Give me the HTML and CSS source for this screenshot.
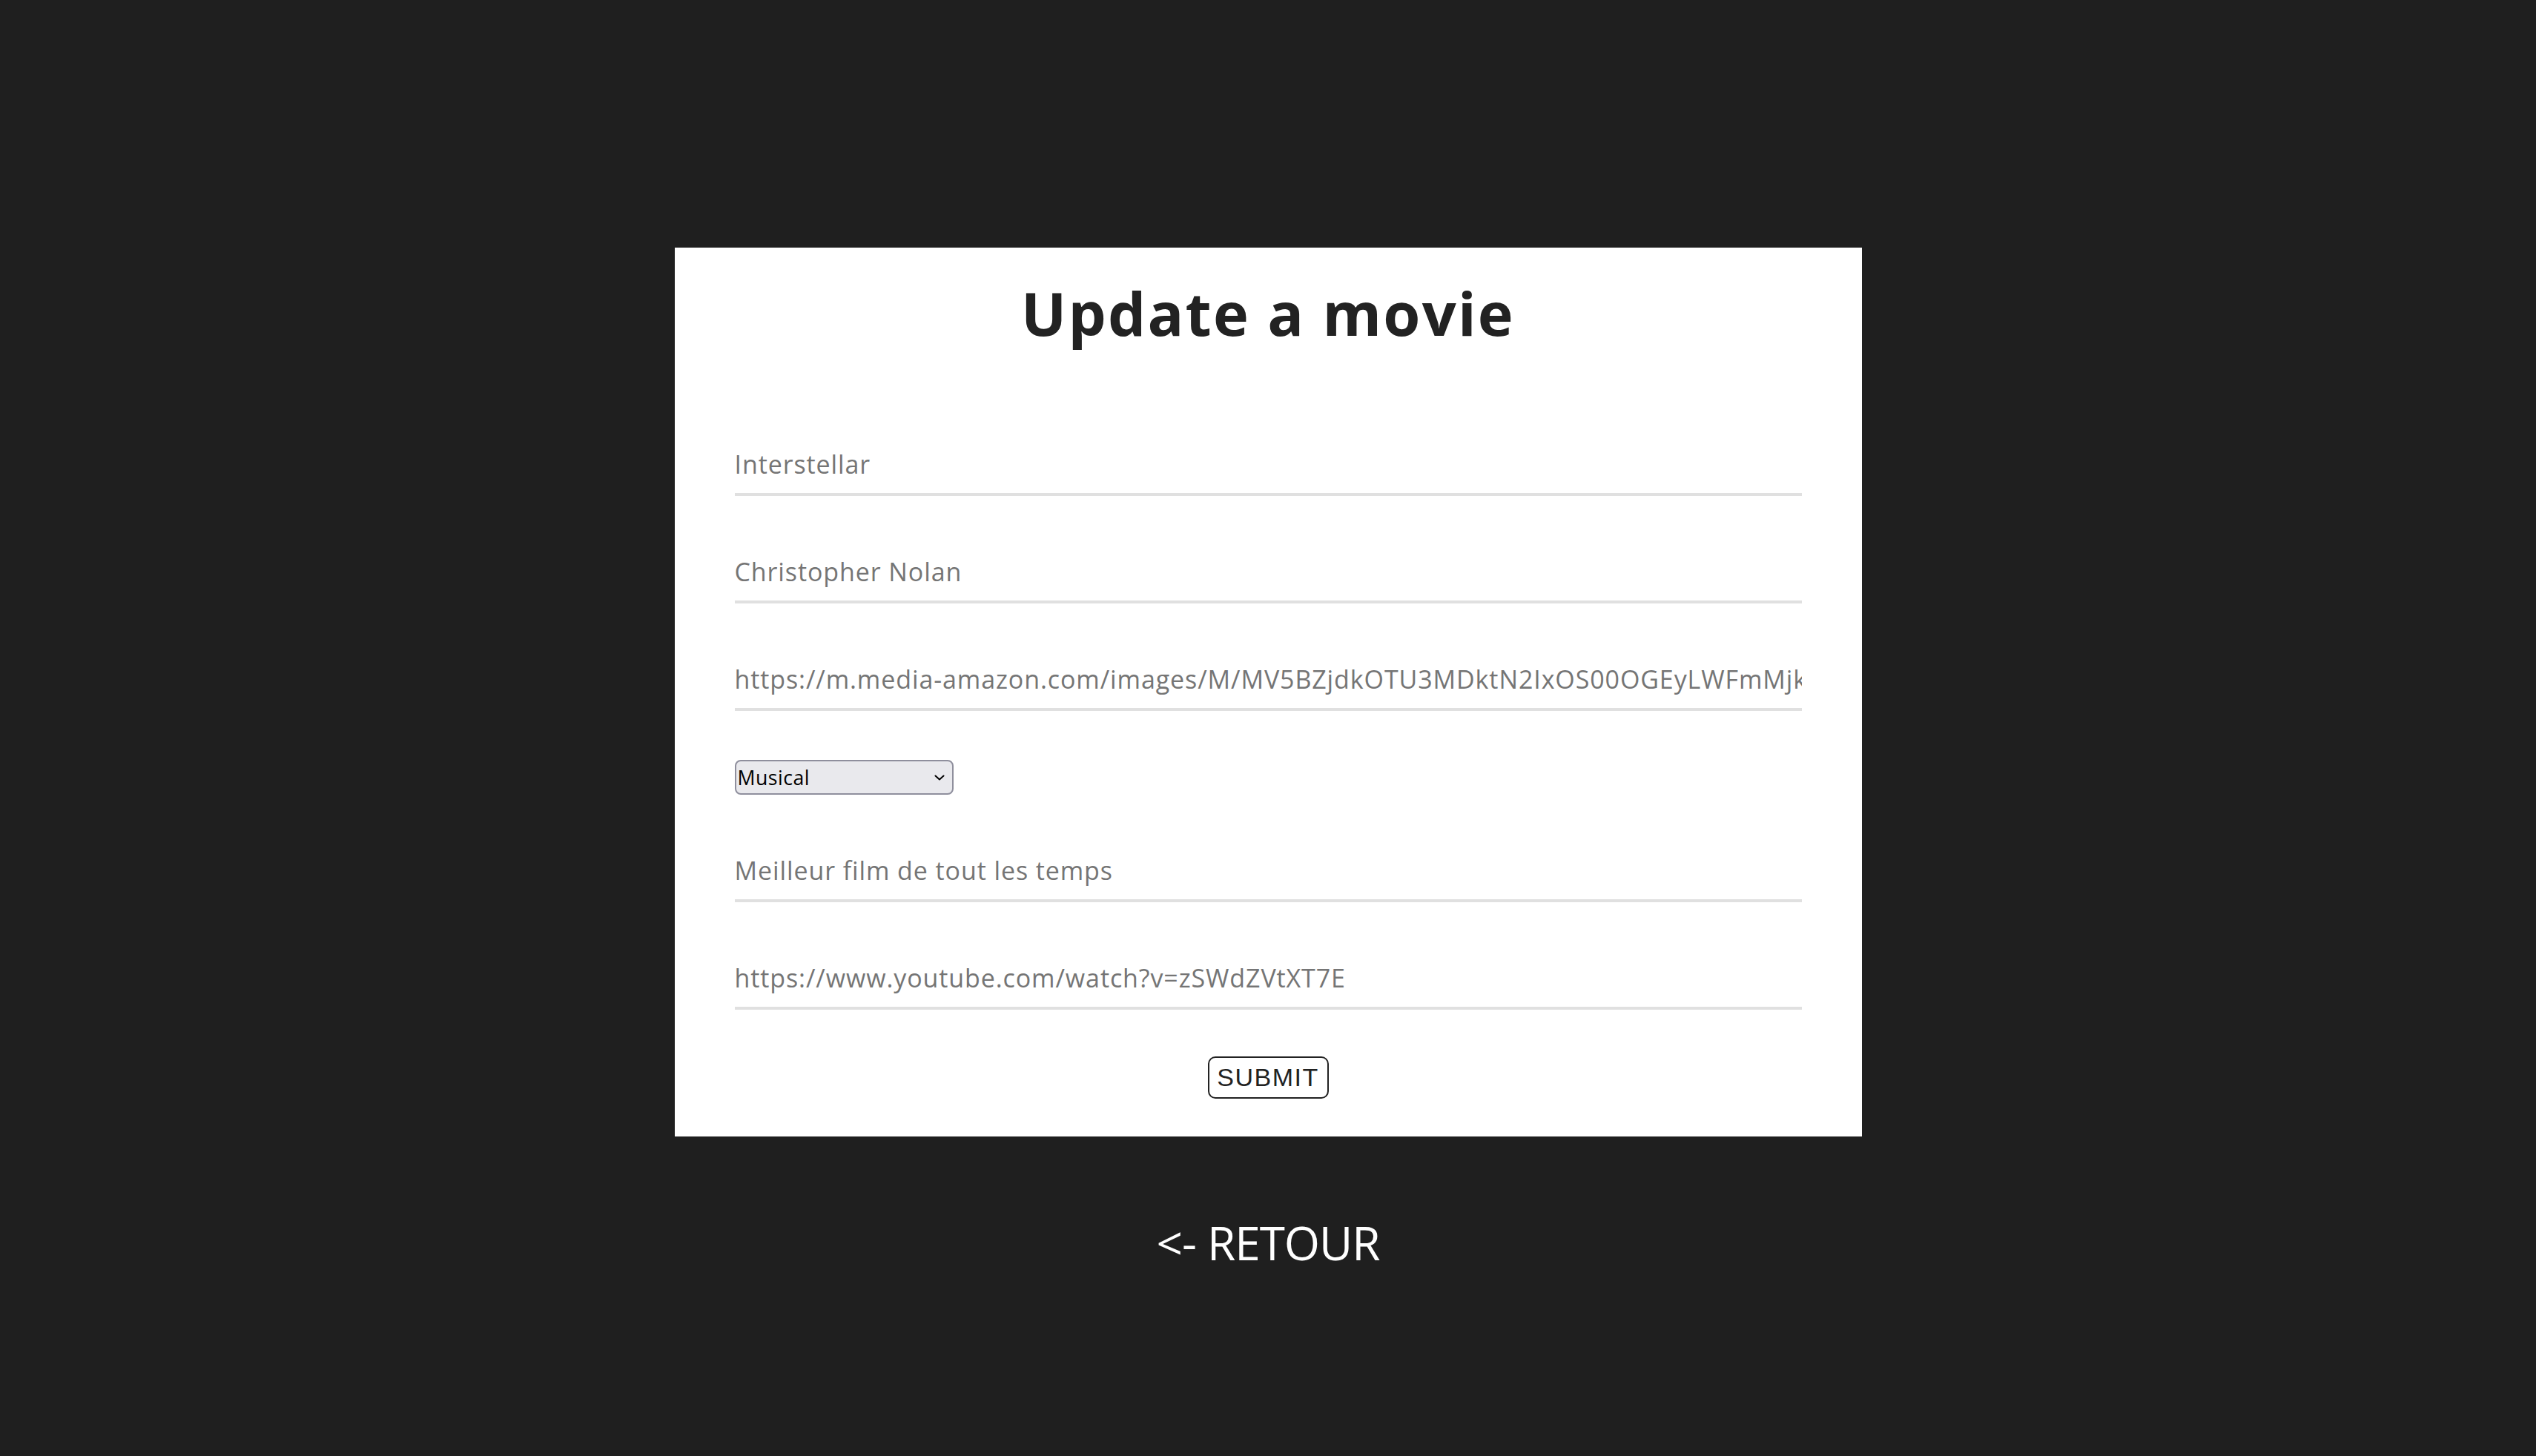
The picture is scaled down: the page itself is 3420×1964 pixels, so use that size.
FILE: index.html
```html
<!DOCTYPE html>
<html lang="fr">
<head>
<meta charset="utf-8">
<title>Update a movie</title>
<link rel="stylesheet" href="styles.css">
</head>
<body>
<main class="page">
  <section class="card">
    <h1 class="title">Update a movie</h1>
    <form class="form">
      <input class="field" type="text" value="Interstellar">
      <input class="field" type="text" value="Christopher Nolan">
      <input class="field" type="text" value="https://m.media-amazon.com/images/M/MV5BZjdkOTU3MDktN2IxOS00OGEyLWFmMjktY2FiMmZkNWIyODZiXkEyXkFqcGdeQXVyMTMxODk2OTU@._V1_SX300.jpg">
      <div class="select-wrap">
        <select class="genre">
          <option>Musical</option>
        </select>
        <svg class="chevron" viewBox="0 0 14 8" width="14" height="8" aria-hidden="true"><path d="M1.5 1.5 L7 6.5 L12.5 1.5" fill="none" stroke="#000" stroke-width="2" stroke-linecap="round" stroke-linejoin="round"/></svg>
      </div>
      <input class="field" type="text" value="Meilleur film de tout les temps">
      <input class="field" type="text" value="https://www.youtube.com/watch?v=zSWdZVtXT7E">
      <button class="submit" type="button">SUBMIT</button>
    </form>
  </section>
  <a class="back" href="#">&lt;- RETOUR</a>
</main>
</body>
</html>
```
FILE: styles.css
```css
* { box-sizing: border-box; }
html, body { margin: 0; padding: 0; }
html { background: #1f1f1f; }
body {
  background: #1f1f1f;
  font-family: "Open Sans", "DejaVu Sans", sans-serif;
  height: 100vh;
  overflow: hidden;
}
.page {
  display: flex;
  flex-direction: column;
  align-items: center;
  padding-top: 334px;
}
.card {
  width: 1601px;
  background: #ffffff;
  padding: 38px 81px 51px;
  display: flex;
  flex-direction: column;
}
.title {
  margin: 0 0 107px;
  font-family: "Open Sans", sans-serif;
  font-weight: 700;
  font-size: 81px;
  line-height: 100px;
  text-align: center;
  color: #222222;
  letter-spacing: 2.2px;
}
.form {
  display: flex;
  flex-direction: column;
  gap: 55px;
}
.field {
  display: block;
  width: 100%;
  height: 90px;
  padding: 24px 0 16px;
  border: none;
  border-bottom: 4px solid #e0e0e0;
  background: transparent;
  font-family: "Open Sans", sans-serif;
  font-size: 34px;
  line-height: 46px;
  letter-spacing: 0.9px;
  color: #757575;
  outline: none;
}
.select-wrap {
  position: relative;
  align-self: flex-start;
  width: 295px;
  height: 47px;
  margin-top: 11px;
}
.genre {
  appearance: none;
  -webkit-appearance: none;
  display: block;
  width: 100%;
  height: 47px;
  padding: 0 0 0 2px;
  border: 2px solid #8f8f9d;
  border-radius: 8px;
  background: #e9e9ed;
  font-family: "Open Sans", sans-serif;
  font-size: 26.67px;
  letter-spacing: 0.5px;
  color: #000000;
}
.chevron {
  position: absolute;
  left: 269px;
  top: 20px;
  pointer-events: none;
}
.submit {
  align-self: center;
  margin-top: 8px;
  width: 163px;
  height: 57px;
  padding: 0;
  border: 2px solid #222222;
  border-radius: 10px;
  background: #ffffff;
  font-family: "Liberation Sans", Arial, sans-serif;
  font-size: 34px;
  letter-spacing: 1.5px;
  color: #222222;
}
.back {
  margin-top: 103px;
  font-family: "Open Sans", sans-serif;
  font-size: 62px;
  line-height: 80px;
  color: #ffffff;
  text-decoration: none;
  letter-spacing: -1px;
}
```
